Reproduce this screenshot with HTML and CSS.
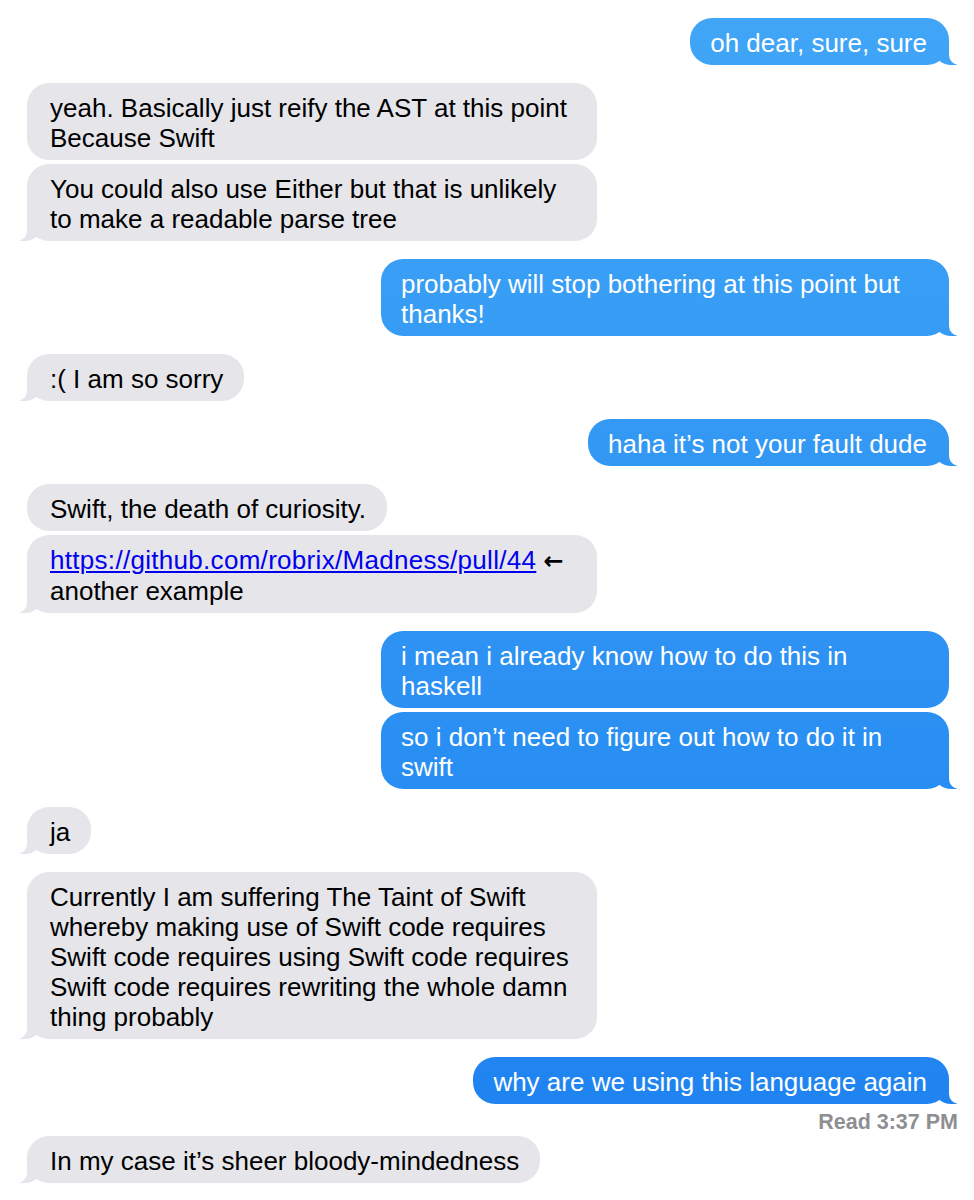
FILE: index.html
```html
<!DOCTYPE html>
<html lang="en">
<head>
<meta charset="utf-8">
<title>Messages</title>
<link rel="stylesheet" href="styles.css">
</head>
<body>
<main class="chat">
  <div class="group sent">
    <div class="bubble tail">oh dear, sure, sure</div>
  </div>
  <div class="group recv">
    <div class="bubble wide">yeah. Basically just reify the AST at this point<br>Because Swift</div>
    <div class="bubble wide tail">You could also use Either but that is unlikely<br>to make a readable parse tree</div>
  </div>
  <div class="group sent">
    <div class="bubble wide tail">probably will stop bothering at this point but<br>thanks!</div>
  </div>
  <div class="group recv">
    <div class="bubble tail">:( I am so sorry</div>
  </div>
  <div class="group sent">
    <div class="bubble tail">haha it’s not your fault dude</div>
  </div>
  <div class="group recv">
    <div class="bubble">Swift, the death of curiosity.</div>
    <div class="bubble wide tail"><a href="#">https://github.com/robrix/Madness/pull/44</a> <span class="arrow">←</span><br>another example</div>
  </div>
  <div class="group sent">
    <div class="bubble wide">i mean i already know how to do this in<br>haskell</div>
    <div class="bubble wide tail">so i don’t need to figure out how to do it in<br>swift</div>
  </div>
  <div class="group recv">
    <div class="bubble tail">ja</div>
  </div>
  <div class="group recv">
    <div class="bubble wide tail">Currently I am suffering The Taint of Swift<br>whereby making use of Swift code requires<br>Swift code requires using Swift code requires<br>Swift code requires rewriting the whole damn<br>thing probably</div>
  </div>
  <div class="group sent">
    <div class="bubble tail">why are we using this language again</div>
    <div class="receipt">Read 3:37 PM</div>
  </div>
  <div class="group recv after-receipt">
    <div class="bubble tail">In my case it’s sheer bloody-mindedness</div>
  </div>
</main>
</body>
</html>
```
FILE: styles.css
```css
html {
  background: #ffffff;
}

body {
  margin: 0;
  font-family: "Liberation Sans", Arial, sans-serif;
  color: #000;
}

.chat {
  display: flex;
  flex-direction: column;
  padding: 18px 25px 0 27px;
}

.group {
  display: flex;
  flex-direction: column;
  gap: 4px;
}

.group + .group {
  margin-top: 18px;
}

.group.after-receipt {
  margin-top: 2px;
}

.sent {
  align-items: flex-end;
}

.recv {
  align-items: flex-start;
}

.bubble {
  position: relative;
  box-sizing: border-box;
  border-radius: 22px;
  font-size: 26px;
  line-height: 30px;
  padding: 10px 21px 7px 21px;
}

.sent .bubble {
  max-width: 568px;
  color: #fff;
  background: linear-gradient(180deg, #41a6f6 0px, #1c81f0 1200px) fixed;
  padding-left: 20px;
  padding-right: 22px;
}

.recv .bubble {
  max-width: 570px;
  background: #e5e5ea;
  padding-left: 23px;
}

.sent .bubble.wide {
  width: 568px;
}

.recv .bubble.wide {
  width: 570px;
}

.bubble a {
  color: #0000ee;
  text-decoration: underline;
  letter-spacing: 0.3px;
}

.arrow {
  font-family: "DejaVu Sans", sans-serif;
  font-size: 24px;
  font-weight: bold;
}

/* tails */
.bubble.tail::before,
.bubble.tail::after {
  content: "";
  position: absolute;
  bottom: 0;
  height: 22px;
}

.sent .bubble.tail::before {
  right: -8px;
  width: 22px;
  background: inherit;
  border-bottom-left-radius: 16px 14px;
}

.sent .bubble.tail::after {
  right: -24px;
  width: 24px;
  background: #fff;
  border-bottom-left-radius: 10px;
}

.recv .bubble.tail::before {
  left: -7px;
  width: 21px;
  background: #e5e5ea;
  border-bottom-right-radius: 16px 14px;
}

.recv .bubble.tail::after {
  left: -24px;
  width: 24px;
  background: #fff;
  border-bottom-right-radius: 10px;
}

.receipt {
  margin-top: 1px;
  margin-bottom: -1px;
  margin-right: -9px;
  font-size: 21.5px;
  line-height: 26px;
  font-weight: bold;
  color: #8e8e93;
}
```
